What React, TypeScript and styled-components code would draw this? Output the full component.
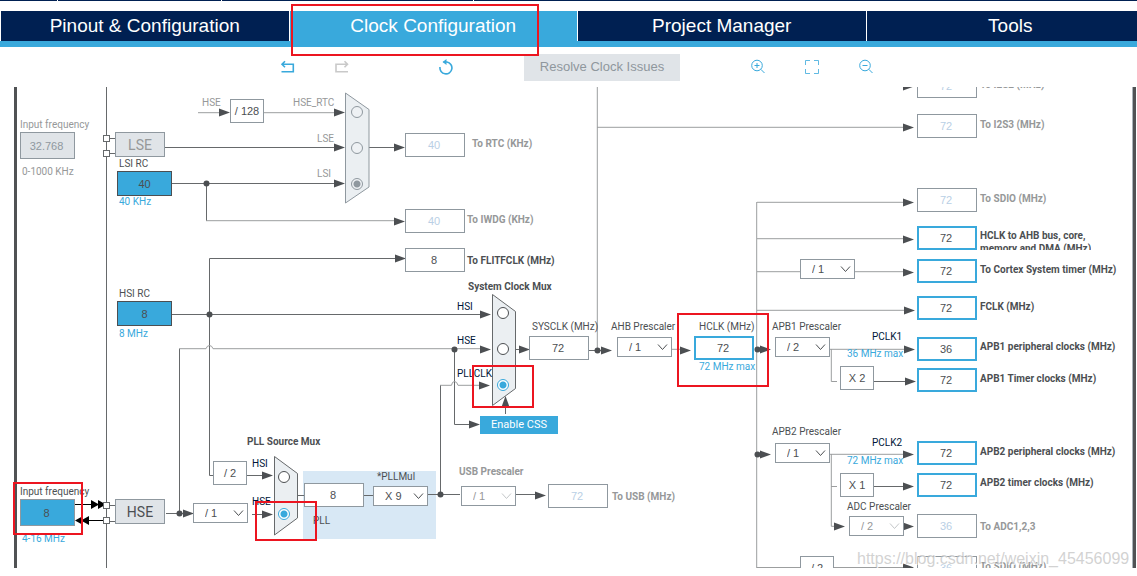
import React from "react";
import styled, { createGlobalStyle, css } from "styled-components";

const blue = "#39a9dc";
const navy = "#002052";
const ink = "#4c4f52";
const muted = "#969899";
const edge = "#8f989f";
const panel = "#e0e4e8";
const wire = "#66696b";
const softWire = "#9c9e9f";
const alertRed = "#ec1520";
const captionFont = 'Roboto, "Liberation Sans", sans-serif';

const GlobalStyle = createGlobalStyle`
  *, *::before, *::after { box-sizing: border-box; }
  body {
    margin: 0;
    background: #fff;
    color: ${ink};
    font-family: "Liberation Sans", Arial, sans-serif;
    font-size: 10px;
    line-height: 12px;
  }
  button, input, select { font: inherit; margin: 0; }
`;

const Frame = styled.div`
  overflow: hidden;
`;

const Page = styled.div`
  display: flex;
  flex-direction: column;
  min-height: 100vh;
  margin-right: -17px;
  padding-bottom: 8px;
`;

const TopStrip = styled.div`
  display: flex;
  gap: 1px;
  height: 1px;
  margin-bottom: 10px;
`;

const StripPart = styled.span<{ $w?: number }>`
  flex: ${(p) => (p.$w ? `0 0 ${p.$w}px` : "1")};
  background: ${navy};
`;

const Tabs = styled.nav`
  display: grid;
  grid-template-columns: repeat(4, 1fr);
  gap: 1px;
  height: 36px;
  padding-left: 1px;
  background: linear-gradient(#fff 30px, ${blue} 30px);
`;

const TabCell = styled.div`
  position: relative;
  display: flex;
`;

const Tab = styled.button<{ $active?: boolean }>`
  flex: 1;
  height: ${(p) => (p.$active ? 36 : 30)}px;
  padding: 0 0 ${(p) => (p.$active ? 6 : 0)}px;
  border: 0;
  background: ${(p) => (p.$active ? blue : navy)};
  color: #fff;
  font-size: 19px;
  line-height: 30px;
`;

const Toolbar = styled.div`
  display: flex;
  align-items: center;
  justify-content: center;
  gap: 70px;
  height: 40px;
`;

const ToolGroup = styled.div`
  display: flex;
  gap: 38px;
`;

const HistoryTools = styled(ToolGroup)`
  margin-right: 18px;
`;

const ToolButton = styled.button`
  width: 16px;
  height: 16px;
  padding: 0;
  border: 0;
  background: none;
  color: ${blue};
  &:disabled { color: #c9c9c9; }
  svg { display: block; }
`;

const ResolveButton = styled.button`
  width: 156px;
  height: 27px;
  padding: 0;
  border: 0;
  background: ${panel};
  color: #8f979d;
  font-size: 13px;
`;

const Viewport = styled.main`
  position: relative;
  flex: 1 0 481px;
  height: 481px;
  overflow: hidden;
`;

/* The diagram is larger than its viewport and is scrolled down by the header height. */
const Sheet = styled.div`
  position: absolute;
  inset: -87px 0 auto 0;
  height: 600px;
`;

const Wires = styled.svg`
  position: absolute;
  inset: 0;
  width: 100%;
  height: 100%;
`;

type At = { $x: number; $y: number };

const placed = css<At>`
  position: absolute;
  left: ${(p) => p.$x}px;
  top: ${(p) => p.$y}px;
`;

const tones = { ink, muted, blue, navy: "#001638" };
type Tone = keyof typeof tones;

const Caption = styled.label<At & { $tone?: Tone; $bold?: boolean }>`
  ${placed}
  color: ${(p) => tones[p.$tone ?? "ink"]};
  font-family: ${captionFont};
  font-weight: ${(p) => (p.$bold ? 700 : 400)};
  line-height: 12px;
  white-space: pre;
`;

const TwoLineCaption = styled(Caption)`
  line-height: 13px;
  height: 21px;
  overflow: hidden;
`;

type BoxKind = "plain" | "off" | "live";

const ValueBox = styled.output<At & { $kind: BoxKind }>`
  ${placed}
  display: grid;
  place-items: center;
  width: 60px;
  height: 24px;
  padding-right: 2px;
  border: ${(p) => (p.$kind === "live" ? `2px solid ${blue}` : `1px solid ${edge}`)};
  background: #fff;
  color: ${(p) => (p.$kind === "off" ? "#b9cfe5" : ink)};
  font-size: 11px;
`;

const ValueInput = styled.input<At>`
  ${placed}
  width: 60px;
  height: 24px;
  padding: 0 2px 0 0;
  border: 2px solid ${blue};
  background: #fff;
  color: ${ink};
  font-size: 11px;
  text-align: center;
`;

const FrequencyInput = styled.input<At>`
  ${placed}
  width: 55px;
  height: 27px;
  padding: 0 2px 0 0;
  border: 1px solid ${edge};
  background: ${blue};
  color: ${ink};
  font-size: 11px;
  text-align: center;
  &:disabled { background: ${panel}; color: ${edge}; }
`;

const Oscillator = styled.div<At & { $on?: boolean }>`
  ${placed}
  display: grid;
  place-items: center;
  width: 50px;
  height: 25px;
  border: 1px solid ${edge};
  background: ${panel};
  color: ${(p) => (p.$on ? ink : muted)};
  font-family: ${captionFont};
  font-size: 14px;
`;

const RcClock = styled.output<At>`
  ${placed}
  display: grid;
  place-items: center;
  width: 55px;
  height: 25px;
  border: 1px solid ${ink};
  background: ${blue};
  font-size: 11px;
`;

const Factor = styled.div<At>`
  ${placed}
  display: grid;
  place-items: center;
  width: 34px;
  height: 24px;
  border: 1px solid ${edge};
  background: #fff;
  font-size: 11px;
`;

const PickerFrame = styled.div<At>`
  ${placed}
  display: grid;
  width: 55px;
  height: 20px;
  svg {
    position: absolute;
    right: 4px;
    top: 6px;
    pointer-events: none;
  }
`;

const PickerSelect = styled.select`
  appearance: none;
  width: 100%;
  height: 100%;
  padding: 0 0 0 11px;
  border: 1px solid ${edge};
  border-radius: 0;
  background: #fff;
  color: ${ink};
  font-size: 11px;
  &:disabled { color: ${muted}; opacity: 1; }
  &:disabled + svg { color: #c4c7c9; }
`;

const Radio = styled.input<At>`
  ${placed}
  appearance: none;
  width: 12px;
  height: 12px;
  border: 1px solid ${ink};
  border-radius: 50%;
  background: #fff;
  &:checked {
    border-color: ${blue};
    background: radial-gradient(circle, ${blue} 3px, #fff 4px);
  }
  &:disabled { border-color: ${edge}; background: #eef1f4; }
  &:disabled:checked { background: radial-gradient(circle, ${edge} 3px, #eef1f4 4px); }
`;

const CssButton = styled.button<At>`
  ${placed}
  width: 78px;
  height: 18px;
  padding: 0;
  border: 0;
  background: ${blue};
  color: #fff;
  font-family: ${captionFont};
  font-size: 11px;
`;

const PllPanel = styled.div<At>`
  ${placed}
  width: 133px;
  height: 68px;
  background: #d8e8f5;
`;

const Marker = styled.div<At & { $w: number; $h: number }>`
  ${placed}
  width: ${(p) => p.$w}px;
  height: ${(p) => p.$h}px;
  border: 2px solid ${alertRed};
  pointer-events: none;
`;

const Watermark = styled.div<At>`
  ${placed}
  color: rgba(190, 190, 190, 0.7);
  font-size: 16px;
  line-height: 20px;
  text-shadow: 1px 1px 0 rgba(255, 255, 255, 0.8);
  white-space: nowrap;
`;

function Picker({ x, y, id, value, disabled }: { x: number; y: number; id: string; value: string; disabled?: boolean }) {
  return (
    <PickerFrame $x={x} $y={y}>
      <PickerSelect id={id} defaultValue={value} disabled={disabled} aria-label={id}>
        <option>{value}</option>
      </PickerSelect>
      <svg width="11" height="8" viewBox="0 0 11 8" fill="none" stroke="currentColor">
        <path d="M1 1.5 5.5 6.5 10 1.5" />
      </svg>
    </PickerFrame>
  );
}

const darkWires = [
  "M106.5 87V568",
  "M110 138.5H115M110 153.5H115M165 147.5H335M172 183.5H335M206.5 183V221M369 147.5H395",
  "M406 258.5H209.5V475.5H213M172 314.5H482",
  "M179.5 349V513M166 513.5H188M247 475.5H265M252 514.5H265",
  "M454.5 349V424.5H472M440.5 494V385M505.5 414V404M516 349.5H524",
  "M589 350.5H604M298 495.5H304M364 495.5H373M428 494.5H460M516 494.5H538",
  "M110 505.5H115M110 521.5H115",
  "M874 381.5H906M874 486.5H906",
];

const softWires = [
  "M198 112.7H222M264 112.7H336M206 220.7H395",
  "M179 348.7H206Q207 345.5 209.5 345.5T213 348.7H482",
  "M440 385.3H451.5Q452 381.5 454.5 381.5T458 385.3H482",
  "M597.3 87V350M597 127.3H906M672 349.3H684",
  "M756.7 202V568M757 202.3H906M757 238.7H906M757 271.7H800M855 271.7H906M757 310.3H906",
  "M830 349.3H906M831.3 349V381.5H837",
  "M830 454.3H906M831.3 454V526.3H838M831 486.5H837M904 526.3H908",
  "M757 567.5H906",
];

const rightHeads: [number, number][] = [
  [230, 112], [345, 112], [345, 147], [345, 183], [405, 147], [405, 221], [406, 258],
  [491, 314], [491, 349], [490, 385], [480, 424], [530, 349], [612, 350], [691, 350], [771, 349], [771, 454],
  [914, 86], [914, 127], [914, 202], [914, 239], [914, 272], [915, 310], [915, 349], [916, 381],
  [914, 454], [914, 486], [845, 526], [914, 526], [914, 567],
  [273, 475], [273, 514], [194, 513], [546, 495],
];

const joints: [number, number][] = [
  [206, 183], [209, 314], [179, 513], [454, 349], [440, 494], [597, 350], [757, 349], [757, 454],
];

const pins = [135, 150, 502, 517];

function WireLayer() {
  return (
    <Wires aria-hidden="true">
      <g fill="none" stroke={wire}>
        {darkWires.map((d) => <path key={d} d={d} />)}
      </g>
      <g fill="none" stroke={softWire}>
        {softWires.map((d) => <path key={d} d={d} />)}
      </g>
      <path d="M75 504.5H104M104 520.5H78" stroke="#000" />
      <path d="M91 500v9l8-4.5zM98 500v9l8-4.5zM83 516v9l-8-4.5zM89 516v9l-8-4.5z" fill="#000" />
      <g fill={ink}>
        {rightHeads.map(([x, y]) => (
          <path key={`${x}-${y}`} d={`M${x - 11} ${y - 3.5}v8l11-4z`} />
        ))}
        {joints.map(([x, y]) => <circle key={`${x}-${y}`} cx={x + 0.5} cy={y + 0.5} r="3" />)}
      </g>
      <g fill="#fff" stroke={wire}>
        {pins.map((y) => <rect key={y} x="103.5" y={y + 0.5} width="6" height="6" />)}
      </g>
      <g fill="#ebeff2" stroke={wire}>
        <path d="M345.5 93 369 109.5V187L345.5 203z" stroke={edge} />
        <path d="M492.5 294.5 515.5 311.5V388.5L492.5 405.5z" />
        <path d="M274.5 456.5 297.5 473.5V518L274.5 535z" />
      </g>
      <path d="M505.5 396 509.5 407h-8z" fill={ink} />
      <rect x="14" y="87" width="3" height="481" fill="#505254" />
      <rect x="1132" y="87" width="1" height="481" fill="#aab4ba" />
      <rect x="1133" y="87" width="3" height="481" fill="#505254" />
    </Wires>
  );
}

type Text = { x: number; y: number; t: string; tone?: Tone; bold?: boolean; id?: string };

const captions: Text[] = [
  { x: 20, y: 119, t: "Input frequency", tone: "muted", id: "lse-freq" },
  { x: 22, y: 166, t: "0-1000 KHz", tone: "muted" },
  { x: 119, y: 158, t: "LSI RC", id: "lsi" },
  { x: 119, y: 196, t: "40 KHz", tone: "blue" },
  { x: 202, y: 97, t: "HSE", tone: "muted" },
  { x: 293, y: 97, t: "HSE_RTC", tone: "muted", id: "rtc-hse" },
  { x: 317, y: 133, t: "LSE", tone: "muted", id: "rtc-lse" },
  { x: 317, y: 168, t: "LSI", tone: "muted", id: "rtc-lsi" },
  { x: 119, y: 288, t: "HSI RC", id: "hsi" },
  { x: 119, y: 328, t: "8 MHz", tone: "blue" },
  { x: 468, y: 281, t: "System Clock Mux", bold: true },
  { x: 457, y: 301, t: "HSI", tone: "navy", id: "sys-hsi" },
  { x: 457, y: 335, t: "HSE", tone: "navy", id: "sys-hse" },
  { x: 457, y: 368, t: "PLLCLK", tone: "navy", id: "sys-pll" },
  { x: 247, y: 436, t: "PLL Source Mux", bold: true },
  { x: 252, y: 458, t: "HSI", tone: "navy", id: "pll-hsi" },
  { x: 252, y: 496, t: "HSE", tone: "navy", id: "pll-hse" },
  { x: 20, y: 486, t: "Input frequency", id: "hse-freq" },
  { x: 22, y: 533, t: "4-16 MHz", tone: "blue" },
  { x: 377, y: 471, t: "*PLLMul", id: "pll-mul" },
  { x: 313, y: 515, t: "PLL" },
  { x: 459, y: 466, t: "USB Prescaler", tone: "muted", bold: true, id: "usb-prescaler" },
  { x: 532, y: 321, t: "SYSCLK (MHz)", id: "sysclk" },
  { x: 611, y: 321, t: "AHB Prescaler", id: "ahb-prescaler" },
  { x: 699, y: 321, t: "HCLK (MHz)", id: "hclk" },
  { x: 699, y: 361, t: "72 MHz max", tone: "blue" },
  { x: 772, y: 321, t: "APB1 Prescaler", id: "apb1-prescaler" },
  { x: 872, y: 331, t: "PCLK1", tone: "navy" },
  { x: 847, y: 348, t: "36 MHz max", tone: "blue" },
  { x: 772, y: 426, t: "APB2 Prescaler", id: "apb2-prescaler" },
  { x: 872, y: 437, t: "PCLK2", tone: "navy" },
  { x: 847, y: 455, t: "72 MHz max", tone: "blue" },
  { x: 847, y: 501, t: "ADC Prescaler", id: "adc-prescaler" },
];

type Out = { id: string; x: number; y: number; v: string; kind: BoxKind; label?: string; lx?: number; ly?: number };

const outputs: Out[] = [
  { id: "rtc", x: 405, y: 133, v: "40", kind: "off", label: "To RTC (KHz)", lx: 472, ly: 138 },
  { id: "iwdg", x: 405, y: 209, v: "40", kind: "off", label: "To IWDG (KHz)", lx: 467, ly: 214 },
  { id: "flitf", x: 405, y: 248, v: "8", kind: "plain", label: "To FLITFCLK (MHz)", lx: 467, ly: 255 },
  { id: "sysclk", x: 529, y: 336, v: "72", kind: "plain" },
  { id: "pll-in", x: 304, y: 483, v: "8", kind: "plain" },
  { id: "usb", x: 548, y: 484, v: "72", kind: "off", label: "To USB (MHz)", lx: 612, ly: 491 },
  { id: "i2s2", x: 917, y: 74, v: "72", kind: "off", label: "To I2S2 (MHz)", lx: 980, ly: 79 },
  { id: "i2s3", x: 917, y: 114, v: "72", kind: "off", label: "To I2S3 (MHz)", lx: 980, ly: 119 },
  { id: "sdio", x: 917, y: 188, v: "72", kind: "off", label: "To SDIO (MHz)", lx: 980, ly: 193 },
  { id: "ahb", x: 917, y: 226, v: "72", kind: "live" },
  { id: "cortex", x: 917, y: 259, v: "72", kind: "live", label: "To Cortex System timer (MHz)", lx: 980, ly: 264 },
  { id: "fclk", x: 917, y: 296, v: "72", kind: "live", label: "FCLK (MHz)", lx: 980, ly: 301 },
  { id: "apb1-p", x: 917, y: 337, v: "36", kind: "live", label: "APB1 peripheral clocks (MHz)", lx: 980, ly: 341 },
  { id: "apb1-t", x: 917, y: 368, v: "72", kind: "live", label: "APB1 Timer clocks (MHz)", lx: 980, ly: 373 },
  { id: "apb2-p", x: 917, y: 441, v: "72", kind: "live", label: "APB2 peripheral clocks (MHz)", lx: 980, ly: 446 },
  { id: "apb2-t", x: 917, y: 473, v: "72", kind: "live", label: "APB2 timer clocks (MHz)", lx: 980, ly: 477 },
  { id: "adc", x: 917, y: 514, v: "36", kind: "off", label: "To ADC1,2,3", lx: 980, ly: 521 },
  { id: "sdio-half", x: 917, y: 556, v: "36", kind: "off", label: "To SDIO (MHz)", lx: 980, ly: 561 },
];

const factors: [number, number, string][] = [
  [230, 99, "/ 128"], [213, 461, "/ 2"], [840, 366, "X 2"], [840, 473, "X 1"], [800, 556, "/ 2"],
];

function Icon({ children, width = 1 }: { children: React.ReactNode; width?: number }) {
  return (
    <svg width="16" height="16" viewBox="0 0 16 16" fill="none" stroke="currentColor" strokeWidth={width}>
      {children}
    </svg>
  );
}

export default function App() {
  return (
    <Frame>
      <GlobalStyle />
      <Page>
        <TopStrip>
          <StripPart $w={57} />
          <StripPart $w={163} />
          <StripPart $w={251} />
          <StripPart />
        </TopStrip>
        <Tabs>
          <TabCell><Tab>Pinout &amp; Configuration</Tab></TabCell>
          <TabCell>
            <Tab $active>Clock Configuration</Tab>
            <Marker $x={1} $y={-7} $w={248} $h={52} />
          </TabCell>
          <TabCell><Tab>Project Manager</Tab></TabCell>
          <TabCell><Tab>Tools</Tab></TabCell>
        </Tabs>
        <Toolbar>
          <HistoryTools>
            <ToolButton aria-label="Undo">
              <Icon width={1.6}><path d="M2 5.3H13.3V12.7H1.5M5 2.3 2 5.3 5 8.3" /></Icon>
            </ToolButton>
            <ToolButton aria-label="Redo" disabled>
              <Icon width={1.6}><path d="M13.500 5.300H2V12.700H14M10.500 2.300l3 3-3 3" /></Icon>
            </ToolButton>
          </HistoryTools>
          <ToolButton aria-label="Reset">
            <Icon width={1.6}><path d="M5.500 3H9A6 6 0 1 1 2 8" /><path d="M8.500 0v6L4.500 3z" fill="currentColor" stroke="none" /></Icon>
          </ToolButton>
          <ResolveButton disabled>Resolve Clock Issues</ResolveButton>
          <ToolGroup>
            <ToolButton aria-label="Zoom in">
              <Icon><circle cx="7" cy="6.500" r="5.300" /><path d="M10.800 10.300 14.500 14M4.500 6.500h5M7 4v5" /></Icon>
            </ToolButton>
            <ToolButton aria-label="Fit to window">
              <Icon><path d="M1.500 6V1.500H6M10 1.500H14.500V6M14.500 10V14.500H10M6 14.500H1.500V10" opacity="0.8" /></Icon>
            </ToolButton>
            <ToolButton aria-label="Zoom out">
              <Icon><circle cx="7" cy="6.500" r="5.300" /><path d="M10.800 10.300 14.500 14M4.500 6.500h5" /></Icon>
            </ToolButton>
          </ToolGroup>
        </Toolbar>
        <Viewport>
          <Sheet>
            <PllPanel $x={303} $y={471} />
            <WireLayer />
            {captions.map((c) => (
              <Caption key={`${c.x}-${c.y}`} as={c.id ? "label" : "span"} htmlFor={c.id} $x={c.x} $y={c.y} $tone={c.tone} $bold={c.bold}>
                {c.t}
              </Caption>
            ))}
            {outputs.map((o) => (
              <React.Fragment key={o.id}>
                <ValueBox id={o.id} $x={o.x} $y={o.y} $kind={o.kind}>{o.v}</ValueBox>
                {o.label && (
                  <Caption htmlFor={o.id} $x={o.lx!} $y={o.ly!} $tone={o.kind === "off" ? "muted" : "ink"} $bold>{o.label}</Caption>
                )}
              </React.Fragment>
            ))}
            <TwoLineCaption htmlFor="ahb" $x={980} $y={229} $bold>{"HCLK to AHB bus, core,\nmemory and DMA (MHz)"}</TwoLineCaption>

            <FrequencyInput id="lse-freq" $x={20} $y={132} defaultValue="32.768" disabled />
            <FrequencyInput id="hse-freq" $x={20} $y={499} defaultValue="8" />
            <Oscillator $x={115} $y={132}>LSE</Oscillator>
            <Oscillator $x={115} $y={499} $on>HSE</Oscillator>
            <RcClock id="lsi" $x={117} $y={171}>40</RcClock>
            <RcClock id="hsi" $x={117} $y={301}>8</RcClock>
            {factors.map(([x, y, t]) => <Factor key={`${x}-${y}`} $x={x} $y={y}>{t}</Factor>)}
            <ValueInput id="hclk" $x={694} $y={336} defaultValue="72" />

            <Picker id="hse-prescaler" x={193} y={503} value="/ 1" />
            <Picker id="pll-mul" x={373} y={486} value="X 9" />
            <Picker id="usb-prescaler" x={461} y={486} value="/ 1" disabled />
            <Picker id="ahb-prescaler" x={617} y={337} value="/ 1" />
            <Picker id="cortex-prescaler" x={800} y={259} value="/ 1" />
            <Picker id="apb1-prescaler" x={775} y={337} value="/ 2" />
            <Picker id="apb2-prescaler" x={775} y={443} value="/ 1" />
            <Picker id="adc-prescaler" x={849} y={516} value="/ 2" disabled />

            <Radio type="radio" name="rtc-source" id="rtc-hse" disabled $x={351} $y={106} />
            <Radio type="radio" name="rtc-source" id="rtc-lse" disabled $x={351} $y={142} />
            <Radio type="radio" name="rtc-source" id="rtc-lsi" disabled defaultChecked $x={351} $y={178} />
            <Radio type="radio" name="system-source" id="sys-hsi" $x={497} $y={307} />
            <Radio type="radio" name="system-source" id="sys-hse" $x={497} $y={343} />
            <Radio type="radio" name="system-source" id="sys-pll" defaultChecked $x={497} $y={379} />
            <Radio type="radio" name="pll-source" id="pll-hsi" $x={278} $y={471} />
            <Radio type="radio" name="pll-source" id="pll-hse" defaultChecked $x={278} $y={508} />
            <CssButton $x={480} $y={416}>Enable CSS</CssButton>

            <Marker $x={13} $y={482} $w={70} $h={53} />
            <Marker $x={255} $y={501} $w={62} $h={40} />
            <Marker $x={472} $y={365} $w={62} $h={43} />
            <Marker $x={677} $y={313} $w={92} $h={74} />
            <Watermark $x={857} $y={549}>https://blog.csdn.net/weixin_45456099</Watermark>
          </Sheet>
        </Viewport>
      </Page>
    </Frame>
  );
}
